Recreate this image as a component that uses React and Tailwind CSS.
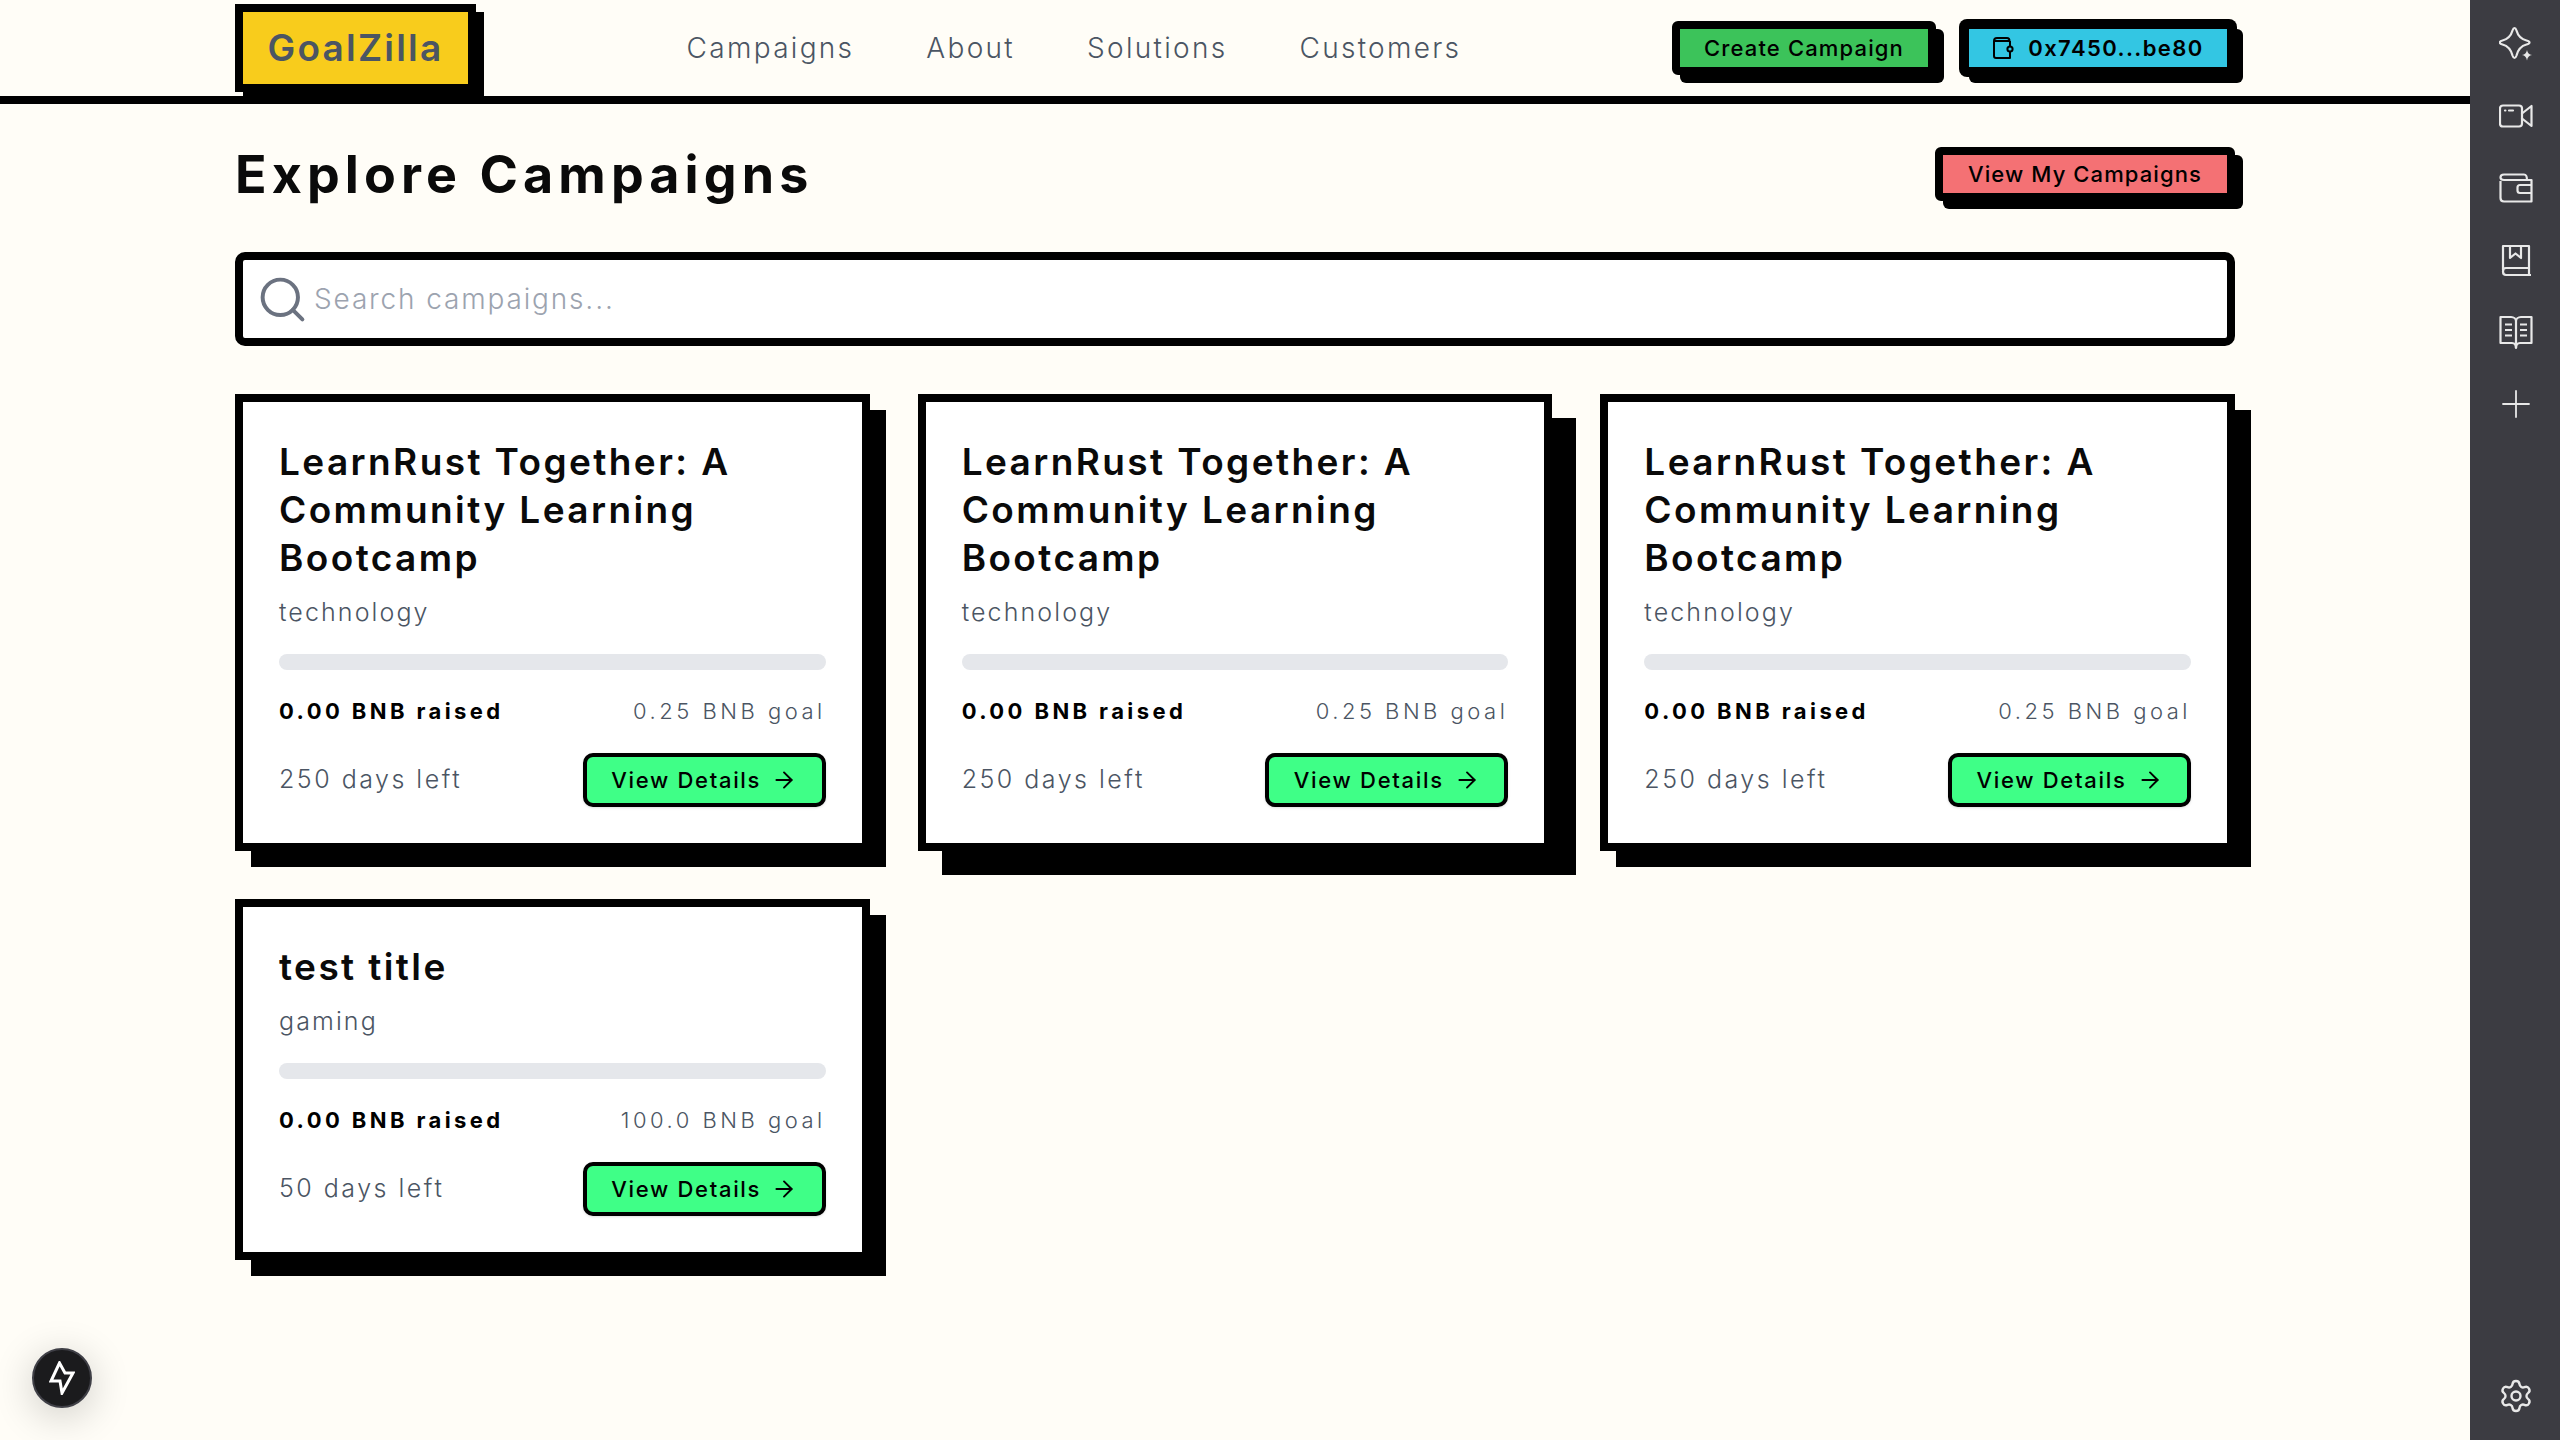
import { ArrowRight, Search, Settings } from 'lucide-react';

const campaigns = [
  { title: 'LearnRust Together: A Community Learning Bootcamp', category: 'technology', goal: '0.25 BNB goal', days: '250 days left', shadow: 'shadow-[16px_16px_0_#000]' },
  { title: 'LearnRust Together: A Community Learning Bootcamp', category: 'technology', goal: '0.25 BNB goal', days: '250 days left', shadow: 'shadow-[24px_24px_0_#000]' },
  { title: 'LearnRust Together: A Community Learning Bootcamp', category: 'technology', goal: '0.25 BNB goal', days: '250 days left', shadow: 'shadow-[16px_16px_0_#000]' },
  { title: 'test title', category: 'gaming', goal: '100.0 BNB goal', days: '50 days left', shadow: 'shadow-[16px_16px_0_#000]' },
];

function WalletSmall() {
  return (
    <svg width="22" height="24" viewBox="0 0 22 24" fill="none" stroke="#000" strokeWidth="2" strokeLinejoin="round">
      <path d="M2 5 C2 2.5 3.5 2 5 2 H15 C17 2 17.5 3.5 17.5 5 H2 V20 C2 21.5 3 22 4 22 H18 V5" />
      <circle cx="18" cy="13" r="2.6" fill="#33c6e3" />
    </svg>
  );
}

function Card({ title, category, goal, days, shadow }) {
  return (
    <div className={`border-8 border-black bg-white px-[36px] pt-[36px] pb-[36px] ${shadow}`}>
      <h3 className="text-[37px] leading-[48px] font-semibold text-[#0a0a0a] tracking-[2.4px]">{title}</h3>
      <p className="mt-[11px] text-[25px] leading-[38px] font-light text-[#4b5563] tracking-[2.1px]">{category}</p>
      <div className="mt-[23px] h-[16px] rounded-full bg-[#e5e7eb]" />
      <div className="mt-[23px] flex items-center justify-between h-[36px]">
        <span className="text-[22px] font-bold text-black tracking-[3.4px]">0.00 BNB raised</span>
        <span className="text-[22px] font-light text-[#4b5563] tracking-[3.5px]">{goal}</span>
      </div>
      <div className="mt-[24px] flex items-center justify-between">
        <span className="text-[25px] font-light text-[#4b5563] tracking-[2.5px]">{days}</span>
        <button className="flex h-[54px] w-[243px] items-center justify-center gap-[10px] rounded-[10px] border-4 border-black bg-[#3fff87] text-[22px] font-medium text-black tracking-[1.7px] shadow-sm">
          View Details
          <ArrowRight size={26} strokeWidth={1.8} />
        </button>
      </div>
    </div>
  );
}

export default function App() {
  return (
    <div className="flex h-screen overflow-hidden bg-[#fffdf7] font-['Inter',sans-serif]">
      <main className="flex-1">
        <header className="h-[104px] border-b-8 border-black">
          <div className="mx-auto flex h-[96px] w-[2000px] items-center justify-between">
            <div className="flex h-[88px] w-[241px] items-center justify-center border-8 border-black bg-[#f8cc1c] text-[37px] font-semibold text-[#4b5563] tracking-[2.2px] shadow-[8px_8px_0_#000]">
              GoalZilla
            </div>
            <nav className="flex items-center gap-[72px] text-[28px] font-light text-[#4b5563] tracking-[2.3px]">
              <a>Campaigns</a>
              <a>About</a>
              <a>Solutions</a>
              <a>Customers</a>
            </nav>
            <div className="flex items-center gap-[25px]">
              <button className="h-[54px] w-[264px] rounded-[6px] border-8 border-black bg-[#3cc35a] text-[22px] font-medium text-black tracking-[1.15px] shadow-[8px_8px_0_#000]">
                Create Campaign
              </button>
              <button className="flex h-[54px] w-[274px] items-center justify-center gap-[14px] rounded-[6px] border-8 border-black bg-[#33c6e3] text-[22px] font-semibold text-black tracking-[1.4px] shadow-[0_0_0_2px_#000,8px_8px_0_#000]">
                <WalletSmall />
                0x7450...be80
              </button>
            </div>
          </div>
        </header>

        <section className="mx-auto w-[2000px] pt-[43px]">
          <div className="flex h-[54px] items-center justify-between">
            <h1 className="mt-[2px] text-[52px] font-bold text-[#0a0a0a] tracking-[5.1px]">Explore Campaigns</h1>
            <button className="h-[54px] w-[300px] rounded-[6px] border-8 border-black bg-[#f47174] text-[22px] font-medium text-black tracking-[1.1px] shadow-[8px_8px_0_#000]">
              View My Campaigns
            </button>
          </div>

          <div className="mt-[51px] flex h-[94px] items-center gap-[5px] rounded-[10px] border-8 border-black bg-white pl-[13px]">
            <Search size={53} strokeWidth={1.8} className="text-[#6b7280]" />
            <input
              placeholder="Search campaigns..."
              className="flex-1 bg-transparent text-[28px] font-light tracking-[1.85px] outline-none placeholder:text-[#9ca3af]"
            />
          </div>

          <div className="mt-[48px] grid grid-cols-3 items-start gap-[48px]">
            {campaigns.map((c, i) => (
              <Card key={i} {...c} />
            ))}
          </div>
        </section>
      </main>

      <aside className="flex w-[90px] flex-col items-center bg-[#3c3c42] pt-[8px] pb-[8px] pl-[2px] text-[#e8e8e8]">
        <div className="flex h-[72px] w-full items-center justify-center">
          <svg width="34" height="36" viewBox="0 0 34 36" fill="none" stroke="currentColor" strokeWidth="2.2" strokeLinejoin="round">
            <path d="M15.5 2 C16.5 2 17 3 17.5 4.5 C19 10 22 13 27.5 14.5 C29.5 15 30.5 15.5 30.5 16.5 C30.5 17.5 29.5 18 27.5 18.5 C22 20 19 23.5 17.5 29.5 C17 31 16.5 32 15.5 32 C14.5 32 14 31 13.5 29.5 C12 23.5 9 20 3.5 18.5 C1.5 18 0.8 17.5 0.8 16.5 C0.8 15.5 1.5 15 3.5 14.5 C9 13 12 10 13.5 4.5 C14 3 14.5 2 15.5 2 Z" />
            <path d="M28 24 C28.6 27 30 28.4 33 29 C30 29.6 28.6 31 28 34.5 C27.4 31 26 29.6 23 29 C26 28.4 27.4 27 28 24 Z" fill="currentColor" stroke="none" />
          </svg>
        </div>
        <div className="flex h-[72px] w-full items-center justify-center">
          <svg width="34" height="24" viewBox="0 0 34 24" fill="none" stroke="currentColor" strokeWidth="2.2" strokeLinejoin="round" strokeLinecap="round">
            <path d="M4 1.5 H20 C22 1.5 23 2.5 23 4.5 V19.5 C23 21.5 22 22.5 20 22.5 H4 C2 22.5 1 21.5 1 19.5 V4.5 C1 2.5 2 1.5 4 1.5 Z" />
            <path d="M23 9.5 L32.5 2 V22 L23 14.5" />
            <path d="M6 6.5 H6.4 M10 6.5 H14" />
          </svg>
        </div>
        <div className="flex h-[72px] w-full items-center justify-center">
          <svg width="34" height="30" viewBox="0 0 34 30" fill="none" stroke="currentColor" strokeWidth="2.2" strokeLinejoin="round">
            <path d="M1.5 8 V25 C1.5 27.5 3 28.5 5 28.5 H32.5 V7 H5 C3 7 1.5 6 1.5 4.5 C1.5 2.5 3 1.5 5 1.5 H25 C27 1.5 28 3 28 7" />
            <path d="M32.5 12 H21 C19.5 12 18.5 13 18.5 14.5 V17.5 C18.5 19 19.5 20 21 20 H32.5" />
          </svg>
        </div>
        <div className="flex h-[72px] w-full items-center justify-center">
          <svg width="32" height="33" viewBox="0 0 32 33" fill="none" stroke="currentColor" strokeWidth="2.2" strokeLinejoin="round">
            <path d="M3 26 V2 H29 V24 H6 C4 24 3 25 3 27.5 C3 30 4 31 6 31 H31" />
            <path d="M10 2 V14 L15.5 9.5 L21 14 V2" />
            <path d="M29 24 V31" />
          </svg>
        </div>
        <div className="flex h-[72px] w-full items-center justify-center">
          <svg width="34" height="35" viewBox="0 0 34 35" fill="none" stroke="currentColor" strokeWidth="2.2" strokeLinejoin="round">
            <path d="M1.5 2 H12 C15 2 17 4 17 6 C17 4 19 2 22 2 H32.5 V28 H21 C19 28 17 29.5 17 33 C17 29.5 15 28 13 28 H1.5 Z" />
            <path d="M17 6 V33" />
            <path d="M6 9.5 H13 M6 15 H13 M6 20.5 H13 M21 9.5 H28 M21 15 H28 M21 20.5 H28" />
          </svg>
        </div>
        <div className="flex h-[72px] w-full items-center justify-center">
          <svg width="28" height="28" viewBox="0 0 28 28" fill="none" stroke="currentColor" strokeWidth="1.8" strokeLinecap="round">
            <path d="M1 14 H27 M14 1 V27" />
          </svg>
        </div>
        <div className="mt-auto flex h-[72px] w-full items-center justify-center">
          <Settings size={36} strokeWidth={1.6} />
        </div>
      </aside>

      <button className="fixed bottom-[32px] left-[32px] flex h-[60px] w-[60px] items-center justify-center rounded-full border-2 border-[#3f3f46] bg-[#1b1b1d] shadow-[0_8px_40px_rgba(0,0,0,0.2)]">
        <svg width="26" height="34" viewBox="0 0 26 34" fill="none" stroke="#fff" strokeWidth="3" strokeLinejoin="miter">
          <path d="M10.5 2 L2 20 H11 L13 32 L24 12 H16 Z" />
        </svg>
      </button>
    </div>
  );
}
